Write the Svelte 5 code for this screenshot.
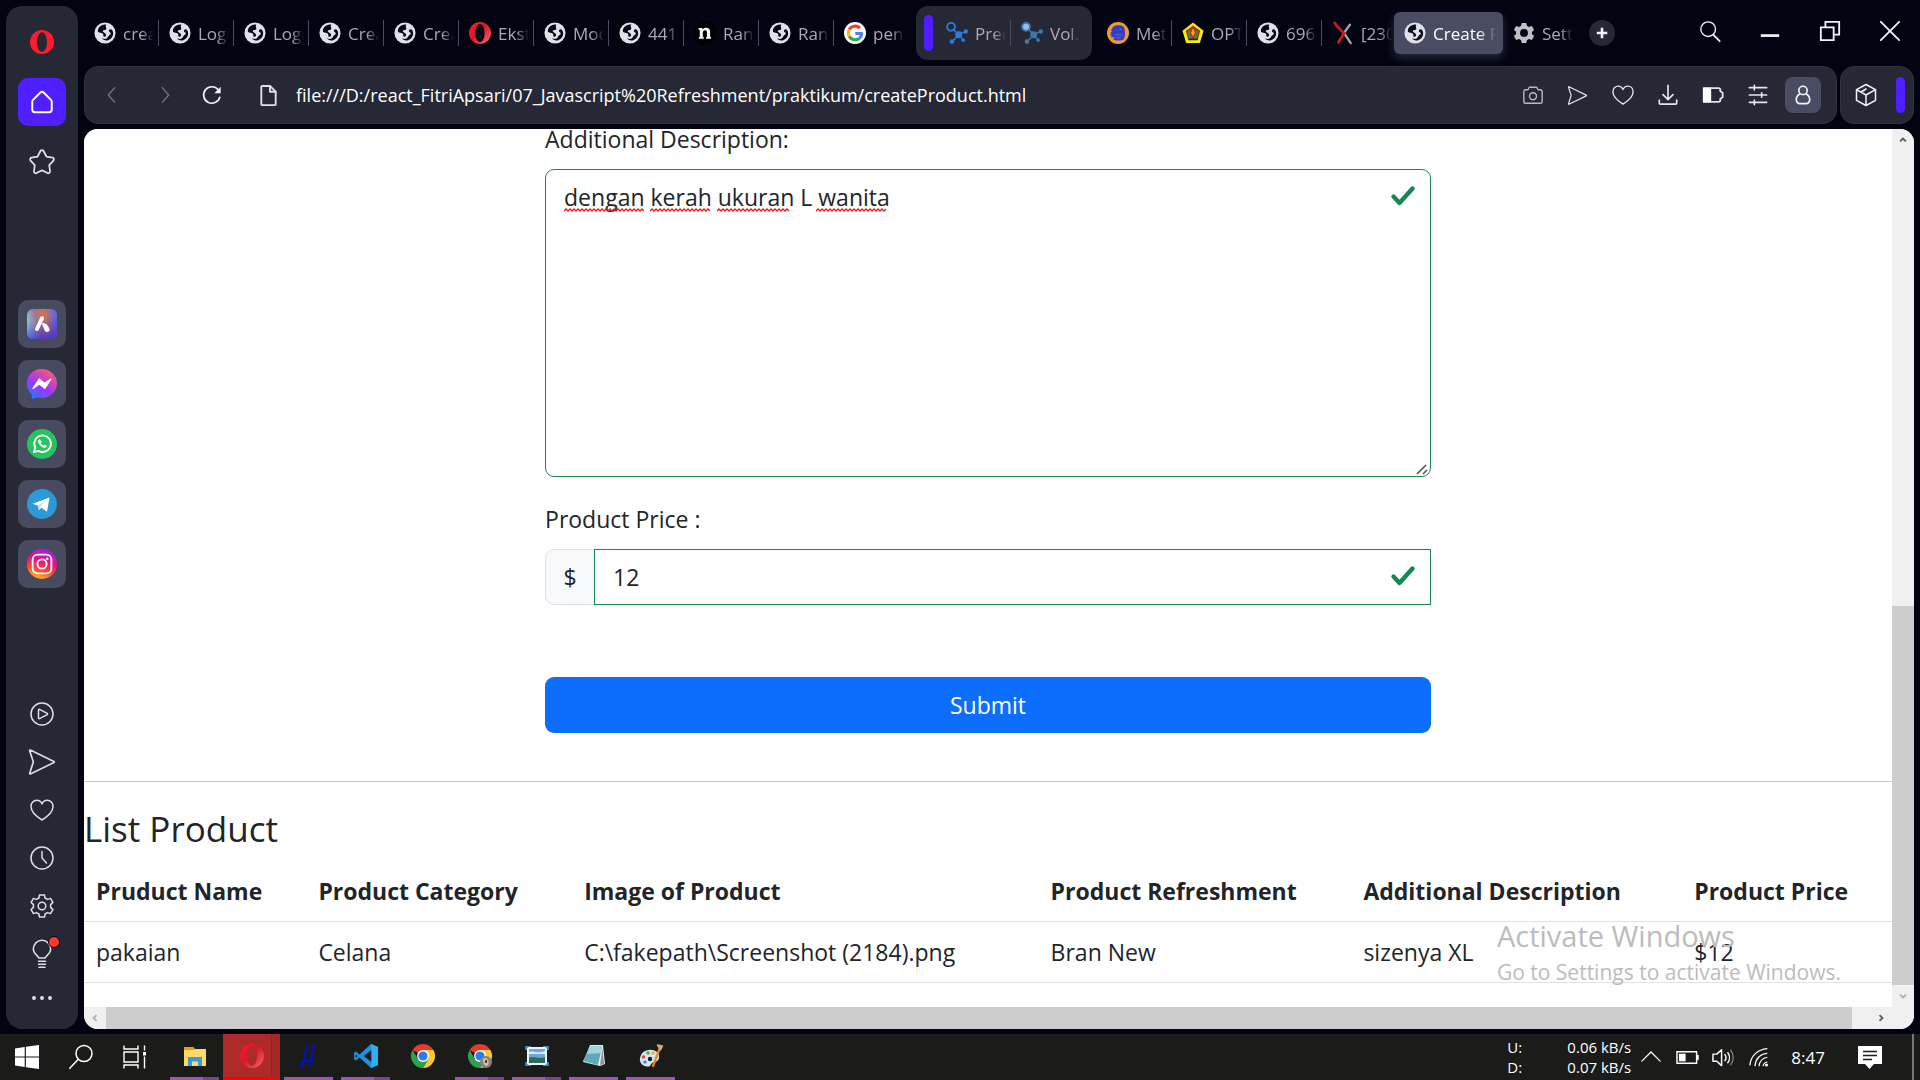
<script>
  const leftTabs = [
    { icon: 'globe', label: 'createProduct' },
    { icon: 'globe', label: 'Login' },
    { icon: 'globe', label: 'Login' },
    { icon: 'globe', label: 'Create' },
    { icon: 'globe', label: 'Create' },
    { icon: 'operaTab', label: 'Ekstensi' },
    { icon: 'globe', label: 'Modul' },
    { icon: 'globe', label: '4412' },
    { icon: 'npm', label: 'Random' },
    { icon: 'globe', label: 'Random' },
    { icon: 'google', label: 'pengertian' }
  ];
  const islandTabs = [
    { icon: 'graph', label: 'Predict' },
    { icon: 'graphAlt', label: 'Vol. 2' }
  ];
  const rightTabs = [
    { icon: 'meta', label: 'Metode' },
    { icon: 'crest', label: 'OPTIM' },
    { icon: 'globe', label: '6964' },
    { icon: 'cross', label: '[2304' }
  ];
  const apps = ['aria', 'messenger', 'whatsapp', 'telegram', 'instagram'];
  const tools = ['play', 'send', 'heart', 'clock', 'gear', 'bulb'];
  const pageTools = ['camera', 'send', 'heart', 'download', 'battery', 'tune'];
  const headings = ['Pruduct Name', 'Product Category', 'Image of Product', 'Product Refreshment', 'Additional Description', 'Product Price'];
  const products = [['pakaian', 'Celana', 'C:\\fakepath\\Screenshot (2184).png', 'Bran New', 'sizenya XL', '$12']];
  const taskbar = [
    { icon: 'explorer', state: 'multi' },
    { icon: 'operaTask', state: 'active' },
    { icon: 'hash', state: 'open' },
    { icon: 'vscode', state: 'multi' },
    { icon: 'chrome', state: 'idle' },
    { icon: 'chromeUser', state: 'multi' },
    { icon: 'photos', state: 'multi' },
    { icon: 'notepad', state: 'open' },
    { icon: 'paint', state: 'open' }
  ];
  let description = $state('dengan kerah ukuran L wanita');
  let price = $state('12');

  function wave(width) {
    let d = 'M0 3';
    for (let x = 2; x <= width; x += 2) d += `L${x} ${x % 4 === 0 ? 3 : 1}`;
    return d;
  }
</script>

{#snippet chromeMark()}
  <path d="M12 12 1.6 6A12 12 0 0 1 22.4 6Z" fill="#e33b2e" />
  <path d="M12 12V6h10.4A12 12 0 0 1 12 24l5.2-9Z" fill="#fcc934" />
  <path d="M12 12 17.2 15 12 24A12 12 0 0 1 1.6 6l5.2 9Z" fill="#2da24c" />
  <circle cx="12" cy="12" r="5.9" fill="#fff" />
  <circle cx="12" cy="12" r="4.6" fill="#2b7de9" />
{/snippet}

{#snippet icon(name)}
  <svg class="icon {name}" viewBox="0 0 24 24" fill="none" stroke="currentColor" stroke-width="1.5" stroke-linecap="round" stroke-linejoin="round" aria-hidden="true">
    {#if name === 'globe'}
      <circle cx="12" cy="12" r="11.5" fill="#dfe3e8" stroke="none" />
      <path d="M13.5 2.8c-3.5-.4-6.800 1-8.600 4-1.200 2-1 4.200.8 4.600 2 .5 3.200.2 4.200 1.600.9 1.300-.6 2.300 1 3 1.400.6 2.600-.7 2.200-2.300-.4-1.500-2.600-2-3.300-3-.8-1.200.3-2 1.800-2.100 1.700-.1 2.100-.9 1.700-2-.4-1.200-.9-2.500.2-3.800Z" fill="#060817" stroke="none" />
      <path d="M18.500 8c-1.200-.2-2.500.7-2.200 2 .3 1.200 1.900.9 2 2.300.1 1.700-2 1.900-2.700 3.300-.6 1.300-1.200 2.400-2.800 2.800-1.500.3-3-.2-4.200-.9 1 2 4 3.400 6.900 2.400 3.500-1.200 5.400-4.300 5.400-7.600 0-1.600-1-4-2.400-4.300Z" fill="#060817" stroke="none" />
    {:else if name === 'opera' || name === 'operaTab' || name === 'operaTask'}
      <defs>
        <linearGradient id="op-{name}" x1="0" y1="0" x2="1" y2="1"><stop offset="0" stop-color="#ff1b2d" /><stop offset=".45" stop-color={name === 'opera' ? '#ff1b2d' : '#d8182a'} /><stop offset="1" stop-color={name === 'opera' ? '#ff1b2d' : '#ff6468'} /></linearGradient>
      </defs>
      <path d="M12 0a12 12 0 1 0 0 24 12 12 0 0 0 0-24Zm0 2.200c3 0 5 4.500 5 9.800s-2 9.800-5 9.800-5-4.500-5-9.800 2-9.800 5-9.800Z" fill="url(#op-{name})" fill-rule="evenodd" stroke="none" />
    {:else if name === 'npm'}
      <circle cx="12" cy="12" r="12" fill="#000" stroke="none" />
      <path d="M6 6.500h3.300v1.600C10.300 6.900 11.600 6.200 13.300 6.200c3 0 4.300 1.800 4.300 4.800v5.300h1v2h-5.500v-2h1V11.300c0-1.500-.6-2.300-2-2.300-1.500 0-2.500 1-2.500 2.700v4.600h1v2H5.300v-2h1V8.500H5v-2Z" fill="#f3f5f7" stroke="none" />
    {:else if name === 'google'}
      <circle cx="12" cy="12" r="12" fill="#fff" stroke="none" />
      <g stroke-width="3.400" stroke-linecap="butt">
        <path d="M17.300 6.700A7.300 7.300 0 0 0 5.700 8.300" stroke="#ea4335" />
        <path d="M5.700 8.300a7.300 7.300 0 0 0 0 7.400" stroke="#fbbc05" />
        <path d="M5.700 15.700a7.300 7.300 0 0 0 11 2" stroke="#34a853" />
        <path d="M16.700 17.700A7 7 0 0 0 19.300 12.500H12.300" stroke="#4285f4" />
      </g>
    {:else if name === 'graph' || name === 'graphAlt'}
      <g stroke={name === 'graph' ? '#2b7de0' : '#4377a8'} stroke-width="1.600">
        <path d="m8 8 6 6M14 14l7-3.500M14 14l-7 7M14 14l4.500 5.500" />
        <g fill={name === 'graph' ? '#2b7de0' : '#4377a8'}><circle cx="13.800" cy="14" r="3" /><circle cx="21.600" cy="10.300" r="1.600" /><circle cx="6.500" cy="21.300" r="1.800" /><circle cx="18.700" cy="19.800" r="1.200" /></g>
        <circle cx="5.500" cy="5.300" r="4.300" fill={name === 'graph' ? 'none' : '#8fc0ee'} stroke-width="2" />
      </g>
    {:else if name === 'meta'}
      <circle cx="12" cy="12" r="12" fill="#f39a2d" stroke="none" />
      <path d="M7 5c3-2 8-2 11 0 2 2 2.500 12 0 14-3 1.500-8 1.500-11 0l1-2.500H4l1.500-2H3l2-2.500H3.500L6 9.500H4Z" fill="#2f3fc4" stroke="none" />
      <path d="M14 8h2M9 14h8M10 17h5" stroke="#7a4bb8" />
    {:else if name === 'crest'}
      <path d="m12 .5 11.500 9L19.500 23h-15L.5 9.500Z" fill="#f5ea14" stroke="none" />
      <path d="m12 5 7 5-2.500 9h-9L5 10Z" fill="#3f8f3a" stroke="#9b2c1e" />
      <path d="M12 4.500 15 12l-3 5-3-5Z" fill="#f2a81d" stroke="#c22b1c" />
      <path d="M8 19h8" stroke="#222" stroke-width="2" />
    {:else if name === 'cross'}
      <path d="M19.500 3 13 12l7.500 11" stroke="#a8a4a2" stroke-width="2.500" />
      <path d="M3 1c3 5 7 8 10 11.500-2 4-4 6.500-6 9.500" stroke="#bf1c24" stroke-width="3.200" />
    {:else if name === 'gearSolid'}
      <path d="M9.500 1h5l.7 3.200 2.200 1.200 3.200-1 2.400 4.200-2.400 2.200v2.400l2.400 2.200-2.400 4.200-3.200-1-2.200 1.200-.7 3.200h-5l-.7-3.200-2.200-1.200-3.200 1L1 15.200 3.400 13v-2.400L1 8.600l2.400-4.200 3.200 1 2.200-1.200ZM12 7.600a4.300 4.300 0 1 0 0 8.600 4.300 4.300 0 0 0 0-8.600Z" fill="#bfc0c6" fill-rule="evenodd" stroke="none" />
    {:else if name === 'plus'}
      <path d="M12 3v18M3 12h18" stroke-width="4.500" stroke-linecap="butt" />
    {:else if name === 'search'}
      <circle cx="10" cy="10" r="8" /><path d="m15.500 16 7 7" stroke-width="2" />
    {:else if name === 'minimise'}
      <path d="M2 17h20" stroke-width="3" stroke-linecap="butt" />
    {:else if name === 'restore'}
      <path d="M2 8h14v14H2ZM7 8V2h15v14h-6" stroke-width="2" stroke-linejoin="miter" />
    {:else if name === 'close'}
      <path d="m2 2 20 20M22 2 2 22" stroke-width="2" />
    {:else if name === 'back'}
      <path d="m15 4-7 8 7 8" />
    {:else if name === 'forward'}
      <path d="m9 4 7 8-7 8" />
    {:else if name === 'reload'}
      <path d="M20.500 14.500A9 9 0 1 1 19 6.500" stroke-width="1.800" /><path d="M21.500 3v7h-7Z" fill="currentColor" stroke="none" />
    {:else if name === 'file'}
      <path d="M13.500 2H5.500a1 1 0 0 0-1 1v18a1 1 0 0 0 1 1h13a1 1 0 0 0 1-1V8Z" stroke-width="2" /><path d="M13.500 2v6h6" stroke-width="2" />
    {:else if name === 'home'}
      <path d="M12 2.500c-.6 0-1.100.3-1.500.7L3.700 10c-.5.500-.7 1-.7 1.700V19c0 1.400 1 2.500 2.500 2.500h13c1.500 0 2.500-1.100 2.500-2.500v-7.300c0-.7-.2-1.200-.7-1.700l-6.800-6.800c-.4-.4-.9-.7-1.500-.7Z" stroke-width="1.800" />
    {:else if name === 'star'}
      <path d="M10.700 2.600a1.500 1.500 0 0 1 2.600 0l2.500 4.700 5.200 1a1.500 1.500 0 0 1 .8 2.500l-3.600 3.900.7 5.300a1.500 1.500 0 0 1-2.100 1.500L12 19.200l-4.800 2.300A1.500 1.500 0 0 1 5.100 20l.7-5.300-3.600-3.900A1.500 1.500 0 0 1 3 8.300l5.200-1Z" />
    {:else if name === 'play'}
      <circle cx="12" cy="12" r="11" /><path d="M8.500 8v8c0 .6.500.8 1 .6l7.700-4c.5-.3.500-.9 0-1.200l-7.700-4c-.5-.2-1 0-1 .6Z" />
    {:else if name === 'send'}
      <path d="M1.200 1c-.4-.2-.7.100-.6.500L4 12 .6 22.500c-.1.400.2.700.6.500L23 12.500c.5-.3.500-.7 0-1Z" />
    {:else if name === 'heart'}
      <path d="M12 22C8 19.500 1 14.500 1 8.500 1 5 3.500 2.300 6.800 2.300c2.200 0 4.200 1.300 5.200 3.700 1-2.400 3-3.700 5.200-3.700C20.500 2.300 23 5 23 8.500 23 14.500 16 19.500 12 22Z" />
    {:else if name === 'clock'}
      <circle cx="12" cy="12" r="11" /><path d="M12 5.500V12l4.500 5" />
    {:else if name === 'gear'}
      <path d="M9.500 1h5l.6 3 2.400 1.400 3-1 2.400 4-2.300 2.200v2.800l2.300 2.200-2.400 4-3-1-2.400 1.400-.6 3h-5l-.6-3-2.400-1.400-3 1-2.400-4 2.300-2.200v-2.800L1.100 8.400l2.400-4 3 1L8.900 4Z" /><circle cx="12" cy="12" r="3.800" />
    {:else if name === 'bulb'}
      <path d="M8.800 16c0-2-5.500-3.800-5.500-9a8.700 8.700 0 0 1 17.400 0c0 5.200-5.500 7-5.500 9ZM8.500 19.200h7M8.500 22.200h7M9 25.200h6" />
    {:else if name === 'dots'}
      <g fill="currentColor" stroke="none"><circle cx="4" cy="12" r="2" /><circle cx="12" cy="12" r="2" /><circle cx="20" cy="12" r="2" /></g>
    {:else if name === 'camera'}
      <path d="M8 3.500h8l1.500 2.800H20a2 2 0 0 1 2 2V19a2 2 0 0 1-2 2H4a2 2 0 0 1-2-2V8.300a2 2 0 0 1 2-2h2.500Z" /><circle cx="12" cy="13.300" r="3.800" />
    {:else if name === 'download'}
      <path d="M12 1.500V17M6.500 11.500 12 17l5.500-5.500M2.500 17.500v3.300c0 .7.500 1.200 1.200 1.200h16.600c.7 0 1.200-.5 1.200-1.200v-3.300" stroke-width="1.800" />
    {:else if name === 'battery'}
      <path d="M2 4.500h16a2 2 0 0 1 2 2V8l2.500 1.500v5L20 16v1.500a2 2 0 0 1-2 2H2Z" stroke-width="2" /><path d="M1 4h9v16H1Z" fill="#fff" stroke="none" />
    {:else if name === 'tune'}
      <path d="M2.500 4h19M2.500 12h19M2.500 20h19M8 1.500v5M16 9.500v5M8 17.500v5" stroke-width="1.800" />
    {:else if name === 'profile'}
      <circle cx="12" cy="6.500" r="5" stroke-width="2" /><path d="M8.500 10.500C5 12.500 3.500 16 4.200 19c.5 2.200 2 3.300 4 3.300h7.600c2 0 3.500-1.100 4-3.300.7-3-.8-6.500-4.300-8.500" stroke-width="2" />
    {:else if name === 'cube'}
      <path d="m12 1.500 9.500 5.200v10.600L12 22.500l-9.500-5.200V6.700ZM2.500 6.700 12 12l9.500-5.300M12 12v10.500M7 9l5-3" stroke-width="1.500" />
    {:else if name === 'aria'}
      <defs><linearGradient id="aria" x1="0" y1=".6" x2="1" y2=".4"><stop offset="0" stop-color="#79cbe6" /><stop offset=".35" stop-color="#a8748a" /><stop offset=".65" stop-color="#cf7350" /><stop offset="1" stop-color="#5a6af0" /></linearGradient>
        <linearGradient id="ariaLow" x1=".2" y1="0" x2=".5" y2="1"><stop offset=".35" stop-color="#4336c9" stop-opacity="0" /><stop offset="1" stop-color="#4330d0" stop-opacity=".85" /></linearGradient></defs>
      <rect width="24" height="24" rx="5" fill="url(#aria)" stroke="none" /><rect width="24" height="24" rx="5" fill="url(#ariaLow)" stroke="none" />
      <path d="M12 7.500 8 16" stroke="#fff" stroke-width="3.200" /><path d="M12.800 12c1.800 0 3.700 2 4.500 4.300.3 1.300-1.300 1.800-2.200 1Z" fill="#fff" stroke="#fff" />
    {:else if name === 'messenger'}
      <defs><linearGradient id="msg" x1=".2" y1="1" x2=".8" y2="0"><stop offset="0" stop-color="#1f7dff" /><stop offset=".4" stop-color="#9a35ff" /><stop offset="1" stop-color="#ff5e6c" /></linearGradient></defs>
      <path d="M12 0a12 11.600 0 0 1 0 23.200c-1.500 0-2.700-.2-4-.6L4 24l-.2-3.800A11.500 11.500 0 0 1 12 0Z" fill="url(#msg)" stroke="none" />
      <path d="m4.800 15.500 5-7.500 4.300 3.500 5.100-3.500-5 7.500-4.300-3.500Z" fill="#fff" stroke="#fff" stroke-width="1" />
    {:else if name === 'whatsapp'}
      <circle cx="12" cy="12" r="12" fill="#25c45f" stroke="none" />
      <path d="M5.500 18.500 6.700 15a6.600 6.600 0 1 1 2.500 2.500Z" stroke="#fff" stroke-width="1.500" />
      <path d="M9.800 8.500c-.8.500-.9 1.600-.3 2.700.8 1.600 2 2.800 3.700 3.500 1.200.5 2.200.1 2.500-.9l-1.700-1-1 .8c-1-.4-1.800-1.200-2.200-2.200l.6-.9Z" fill="#fff" stroke="#fff" stroke-width=".6" />
    {:else if name === 'telegram'}
      <circle cx="12" cy="12" r="12" fill="#2a9bd6" stroke="none" />
      <path d="M4.500 11.800 18 6.700l-2 11.500-4.500-3.200-2 2-.7-3.700Z" fill="#fff" stroke="none" /><path d="m9 13.200 6.500-4.500-5 5.200-.8 2.600Z" fill="#b9dcf0" stroke="none" />
    {:else if name === 'instagram'}
      <defs><linearGradient id="ig" x1=".3" y1="1" x2=".6" y2="0"><stop offset="0" stop-color="#ffc31d" /><stop offset=".3" stop-color="#ff4b30" /><stop offset=".6" stop-color="#e8137c" /><stop offset="1" stop-color="#a31cf2" /></linearGradient></defs>
      <circle cx="12" cy="12" r="12" fill="url(#ig)" stroke="none" />
      <rect x="4.500" y="4.500" width="15" height="15" rx="4" stroke="#fff" /><circle cx="12" cy="12" r="3.700" stroke="#fff" /><circle cx="16.200" cy="7.800" r="1" fill="#fff" stroke="none" />
    {:else if name === 'windows'}
      <path d="M0 3.400 9.700 2v9.500H0ZM10.900 1.800 24 0v11.500H10.900ZM0 12.600h9.700V22L0 20.600ZM10.900 12.600H24V24l-13.100-1.800Z" fill="#fff" stroke="none" />
    {:else if name === 'searchTask'}
      <circle cx="15" cy="8.500" r="8" /><path d="M9.300 14.200.8 23.200" />
    {:else if name === 'taskview'}
      <path d="M1 .5V4h14V.5M1 7h14v10H1ZM1 23.500V20h14v3.500M21.500.5v5M21.500 11.500V23.500" stroke-linejoin="miter" stroke-linecap="butt" stroke-width="1.400" /><path d="M20 7h3v3.500h-3Z" fill="#fff" stroke="none" />
    {:else if name === 'explorer'}
      <path d="M1 3h9l2 2h11v17H1Z" fill="#ffd866" stroke="none" /><path d="M1 3h9l2 3H1Z" fill="#e69f12" stroke="none" /><path d="M5 13h14v9h-4v-4.500H9V22H5Z" fill="#3c97dc" stroke="none" />
    {:else if name === 'hash'}
      <path d="M10 1.500 5.500 22M17 1.500l-4.500 21M4 21.500 6.500 17l9-.8" stroke="#0712a8" stroke-width="2.600" />
    {:else if name === 'vscode'}
      <path d="M17 0 24 3v18l-7 3L5.500 13.500 2 16.500 0 15.300V8.700l2-1.200 3.500 3Z" fill="#1d8fdc" stroke="none" /><path d="M17.500 6v12L9.800 12ZM1.500 10.300 3.800 12l-2.300 1.700Z" fill="#1b1b1a" stroke="none" /><path d="M17 0 24 3v18l-7 3 .5-6V6Z" fill="#2fb0f5" stroke="none" />
    {:else if name === 'chrome'}
      <g stroke="none">{@render chromeMark()}</g>
    {:else if name === 'chromeUser'}
      <g stroke="none">{@render chromeMark()}<circle cx="18" cy="18" r="6" fill="#8b8177" /><path d="M15 15c2-2 4-1 5 1s1 4-1 6c-3 0-4-3-4-7Z" fill="#c9c2b8" /><path d="M17 16h2v3h-2Z" fill="#4c443d" /></g>
    {:else if name === 'photos'}
      <path d="M0 2h6v4H0ZM18 2h6v4h-6ZM0 18h6v4H0ZM18 18h6v4h-6Z" fill="#3d82c0" stroke="none" /><rect x="3" y="4" width="18" height="16" rx="1" fill="#6ea6dc" stroke="#eef3f8" stroke-width="2" /><path d="M4 14c5-3 8 2 16-1v6H4Z" fill="#2e6d57" stroke="none" /><path d="M4 8c4-2 8 2 16-1v3H4Z" fill="#d5ebf9" stroke="none" />
    {:else if name === 'notepad'}
      <path d="M8 1h13l2 19-5 2-17-4Z" fill="#dfeef0" stroke="none" /><path d="M8.500 2 20 2.500 16 21 1 17Z" fill="#5fa9b8" stroke="none" /><path d="M8.500 2 20 2.500 18.500 9 5 10Z" fill="#a4d3da" stroke="none" /><path d="m20.500 4 1.500 16-4 1Z" fill="#8a9693" stroke="none" />
    {:else if name === 'paint'}
      <path d="M10 6c6-1 11 3 10 8s-5 3-7 5-1 4-5 3.500S0 19 1 14s4-7.500 9-8Z" fill="#cfe6f6" stroke="none" /><circle cx="11" cy="15" r="2.200" fill="#1b1b1a" stroke="none" /><circle cx="4.500" cy="13" r="1.800" fill="#e2483d" stroke="none" /><circle cx="9" cy="9" r="1.800" fill="#56ab3f" stroke="none" /><circle cx="14" cy="9" r="1.800" fill="#f0b429" stroke="none" /><circle cx="6" cy="18" r="1.600" fill="#3a7bd5" stroke="none" /><path d="M20.500 5 14 22" stroke="#e98a25" stroke-width="2.200" /><path d="m18.500 1 5 1-2 4Z" fill="#cfa77a" stroke="#cfa77a" />
    {:else if name === 'caret'}
      <path d="m1 17 11-11 11 11" stroke-width="1.500" stroke-linejoin="miter" />
    {:else if name === 'power'}
      <path d="M1 6h20.500v12H1ZM23 10v4" stroke-linejoin="miter" /><path d="M3 8h7v8H3Z" fill="#fff" stroke="none" />
    {:else if name === 'volume'}
      <path d="M1 8.500h4L10 4v16.500L5 16H1Z" /><path d="M13.500 9c1.300 1.800 1.300 4.500 0 6.300M16.500 7c2.200 3 2.200 7.500 0 10.500" /><path d="M19.500 4.500c3.500 4.500 3.500 10.500 0 15" stroke="#777" />
    {:else if name === 'wifi'}
      <path d="M1 22C2 11 10 3 22 2M7 23C8 14 13 8.500 22 7.500M12 23c.8-6 4-9.800 10-10.700M17 23c.3-2.500 2-4.600 5-5" stroke-linecap="butt" /><circle cx="21" cy="21.500" r="1.800" fill="#fff" stroke="none" />
    {:else if name === 'notice'}
      <path d="M0 1h24v18h-8l-4.500 5L7 19H0Z" fill="#fff" stroke="none" /><path d="M5 6.500h14M5 10.500h14M5 14.500h9" stroke="#1b1b1a" stroke-linecap="butt" />
    {:else if name === 'check'}
      <path d="m2.500 12.500 6 6.500L21.500 4.500" stroke="#198754" stroke-width="4.400" />
    {:else if name === 'arrow'}
      <path d="m5 15.500 7-7 7 7" stroke-width="4.500" stroke-linecap="butt" stroke-linejoin="miter" />
    {/if}
  </svg>
{/snippet}

{#snippet tab(item)}
  <button class="tab" role="tab" aria-selected="false">
    {@render icon(item.icon)}<span class="tab-label">{item.label}</span>
  </button>
{/snippet}

{#snippet squiggle(width)}
  <svg class="squiggle" {width} height="4"><path d={wave(width)} fill="none" stroke="#f01818" stroke-width="1.3" /></svg>
{/snippet}

<div class="screen">
  <div class="browser">
    <nav class="sidebar" aria-label="Sidebar">
      <button class="side" aria-label="Opera menu">{@render icon('opera')}</button>
      <button class="side home-button" aria-label="Home">{@render icon('home')}</button>
      <button class="side" aria-label="Pinboards">{@render icon('star')}</button>
      <div class="apps">
        {#each apps as name}<button class="side app" aria-label={name}>{@render icon(name)}</button>{/each}
      </div>
      <div class="tools">
        {#each tools as name}
          <button class="side" aria-label={name}>{@render icon(name)}{#if name === 'bulb'}<span class="alert"></span>{/if}</button>
        {/each}
        <button class="side more" aria-label="More">{@render icon('dots')}</button>
      </div>
    </nav>

    <div class="main">
      <header class="tabbar">
        <div class="tabs" role="tablist">
          <div class="run">{#each leftTabs as item}{@render tab(item)}{/each}</div>
          <div class="island"><span class="bar"></span>{#each islandTabs as item}{@render tab(item)}{/each}</div>
          <div class="run">{#each rightTabs as item}{@render tab(item)}{/each}</div>
          <button class="tab active" role="tab" aria-selected="true">{@render icon('globe')}<span class="tab-label">Create Product</span></button>
          {@render tab({ icon: 'gearSolid', label: 'Settings' })}
        </div>
        <button class="new-tab" aria-label="New tab">{@render icon('plus')}</button>
        <div class="window-controls">
          {#each ['search', 'minimise', 'restore', 'close'] as name}<button aria-label={name}>{@render icon(name)}</button>{/each}
        </div>
      </header>

      <div class="toolbar">
        <div class="address">
          <div class="history">
            <button class="dim" aria-label="Back">{@render icon('back')}</button>
            <button class="dim" aria-label="Forward">{@render icon('forward')}</button>
            <button class="reload-button" aria-label="Reload">{@render icon('reload')}</button>
          </div>
          {@render icon('file')}
          <input class="url" aria-label="Address" value="file:///D:/react_FitriApsari/07_Javascript%20Refreshment/praktikum/createProduct.html" />
          <div class="page-tools">
            {#each pageTools as name}<button aria-label={name}>{@render icon(name)}</button>{/each}
          </div>
          <button class="profile-button" aria-label="Profile">{@render icon('profile')}</button>
        </div>
        <div class="extensions">
          <button aria-label="Extensions">{@render icon('cube')}</button><span class="bar"></span>
        </div>
      </div>

      <div class="viewport">
        <main class="page">
          <form onsubmit={(e) => e.preventDefault()}>
            <label for="description">Additional Description:</label>
            <div class="field">
              <textarea id="description" spellcheck="false" bind:value={description}></textarea>
              <span class="valid">{@render icon('check')}</span>
              <div class="spelling" aria-hidden="true">
                {@render squiggle(80)}{@render squiggle(61)}{@render squiggle(73)}{@render squiggle(71)}
              </div>
              <svg class="grip" viewBox="0 0 12 12" aria-hidden="true"><path d="m1 11 9-9M7 11l4-4" fill="none" stroke="#555" stroke-width="1.6" /></svg>
            </div>
            <label for="price">Product Price :</label>
            <div class="field group">
              <span class="prefix">$</span>
              <input id="price" class="price" bind:value={price} />
              <span class="valid">{@render icon('check')}</span>
            </div>
            <button class="submit" type="submit">Submit</button>
          </form>
          <hr />
          <h2>List Product</h2>
          <table>
            <colgroup><col class="c1" /><col class="c2" /><col class="c3" /><col class="c4" /><col class="c5" /><col /></colgroup>
            <thead><tr>{#each headings as text}<th scope="col">{text}</th>{/each}</tr></thead>
            <tbody>{#each products as row}<tr>{#each row as cell}<td>{cell}</td>{/each}</tr>{/each}</tbody>
          </table>
        </main>
        <div class="vscroll"><span class="up">{@render icon('arrow')}</span><div class="vtrack"><div class="vthumb"></div></div><span class="down">{@render icon('arrow')}</span></div>
        <div class="hscroll"><span class="left">{@render icon('arrow')}</span><div class="htrack"><div class="hthumb"></div></div><span class="right">{@render icon('arrow')}</span></div>
      </div>
    </div>
  </div>

  <footer class="taskbar">
    <div class="system-buttons">
      <button class="system" aria-label="Start">{@render icon('windows')}</button>
      <button class="system" aria-label="Search">{@render icon('searchTask')}</button>
      <button class="system" aria-label="Task view">{@render icon('taskview')}</button>
    </div>
    {#each taskbar as item}
      <button class="task {item.state}" aria-label={item.icon}>{@render icon(item.icon)}</button>
    {/each}
    <div class="tray">
      <dl class="network"><dt>U:</dt><dd>0.06 kB/s</dd><dt>D:</dt><dd>0.07 kB/s</dd></dl>
      <button aria-label="Hidden icons">{@render icon('caret')}</button>
      <button aria-label="Battery">{@render icon('power')}</button>
      <button aria-label="Volume">{@render icon('volume')}</button>
      <button aria-label="Network">{@render icon('wifi')}</button>
      <time>8:47</time>
      <button class="notice-button" aria-label="Notifications">{@render icon('notice')}</button>
    </div>
  </footer>

  <div class="watermark"><strong>Activate Windows</strong><span>Go to Settings to activate Windows.</span></div>
</div>

<style>
  :global(body) { margin: 0; background: #020412; }
  * { box-sizing: border-box; }
  .screen { position: relative; display: flex; flex-direction: column; height: 100vh; overflow: hidden; background: #020412; color: #f2f3f6; font-family: "Segoe UI", "Open Sans", "Noto Sans", sans-serif; font-size: 16px; }
  button { display: flex; align-items: center; justify-content: center; padding: 0; border: 0; background: none; color: inherit; font: inherit; }
  .icon { display: block; flex: none; width: 24px; height: 24px; overflow: visible; }

  .browser { display: flex; flex: 1; min-height: 0; gap: 6px; padding: 6px 6px 5px; }
  .sidebar { display: flex; flex: none; flex-direction: column; align-items: center; gap: 12px; width: 72px; padding: 12px 0 11px; border-radius: 16px; background: #262835; color: #dcdfe6; }
  .side { position: relative; width: 48px; height: 48px; border-radius: 10px; }
  .side .star { width: 28px; height: 28px; }
  .side .home { width: 26px; height: 26px; color: #fff; }
  .home-button { background: #4f1fff; }
  .apps { display: flex; flex-direction: column; gap: 12px; margin-top: 102px; }
  .app { background: #484a60; }
  .app .icon { width: 30px; height: 30px; }
  .tools { margin-top: auto; }
  .tools .send { width: 26px; height: 26px; }
  .tools .more { height: 40px; }
  .alert { position: absolute; top: 6px; right: 6px; width: 12px; height: 12px; border: 1px solid #020412; border-radius: 50%; background: #ff3830; }

  .main { display: flex; flex: 1; flex-direction: column; min-width: 0; }
  .tabbar { display: flex; align-items: center; height: 54px; }
  .tabs, .run { display: flex; align-items: center; }
  .tab { position: relative; justify-content: flex-start; gap: 7px; width: 75px; height: 42px; padding: 0 5px 0 10px; color: #a9abb4; font-size: 17px; }
  .tab .icon { width: 22px; height: 22px; }
  .tab-label { flex: 1; overflow: hidden; text-align: left; white-space: nowrap; mask-image: linear-gradient(90deg, #000 60%, transparent); }
  .run .tab:not(:last-child)::after, .island .tab:not(:last-child)::after { content: ""; position: absolute; top: 8px; right: 0; bottom: 8px; width: 1px; background: #4a4c63; }
  .island { display: flex; align-items: center; height: 54px; margin: 0 5px 0 7px; padding: 0 6px 0 8px; border-radius: 12px; background: #262835; }
  .bar { width: 9px; height: 36px; border-radius: 5px; background: #4f1fff; }
  .island .bar { margin-right: 3px; }
  .tab.active { width: 109px; margin: 0 0 0 -3px; padding-right: 6px; border-radius: 6px; background: #4a4c63; box-shadow: 0 4px 10px #4a4c6388; color: #fff; }
  .tab.active .tab-label { mask-image: linear-gradient(90deg, #000 70%, transparent); }
  .new-tab { width: 26px; height: 26px; margin-left: 11px; border-radius: 50%; background: #262835; }
  .new-tab .icon { width: 14px; height: 14px; }
  .window-controls { display: flex; margin: 0 -6px 0 auto; }
  .window-controls button { width: 60px; height: 48px; }
  .window-controls .icon { width: 22px; height: 22px; margin-bottom: 4px; }

  .toolbar { display: flex; gap: 3px; height: 58px; margin-top: 6px; }
  .address, .extensions { display: flex; align-items: center; border: 1px solid #30323f; border-radius: 14px; background: #262835; }
  .address { flex: 1; min-width: 0; padding: 0 15px 0 0; }
  .history { display: flex; margin-right: 24px; }
  .history button { width: 53px; height: 48px; }
  .history .reload-button { width: 42px; }
  .history .icon { width: 22px; height: 22px; }
  .dim { color: #74767f; }
  .address > .file { width: 23px; height: 23px; color: #dcdfe6; }
  .url { flex: 1; min-width: 0; margin-left: 16px; padding: 0; border: 0; outline: 0; background: none; color: #fff; font: inherit; font-size: 18px; }
  .page-tools { display: flex; }
  .page-tools button { width: 45px; height: 48px; color: #e4e6ea; }
  .page-tools .icon { width: 22px; height: 22px; }
  .page-tools .send { width: 19px; height: 19px; }
  .page-tools .camera { color: #b9bbc2; }
  .profile-button { width: 36px; height: 36px; margin-left: 5px; border-radius: 8px; background: #4a4c63; }
  .profile-button .icon { width: 20px; height: 20px; }
  .extensions { width: 74px; justify-content: space-between; padding: 0 8px 0 13px; }

  .viewport { display: grid; flex: 1; grid-template: 1fr 22px / 1fr 22px; min-height: 0; margin-top: 5px; overflow: hidden; border-radius: 14px; background: #fff; }
  .page { min-width: 0; min-height: 0; overflow: hidden; background: #fff; color: #212529; font-size: 23px; line-height: 36px; }
  form { width: 49%; margin: -8px auto 48px; }
  label { display: block; margin-bottom: 12px; }
  .field { position: relative; margin-bottom: 24px; }
  textarea { display: block; width: 100%; height: 308px; padding: 9px 54px 9px 18px; border: 1px solid #198754; border-radius: 9px; outline: 0; background: #fff; color: inherit; font: inherit; resize: vertical; }
  textarea::-webkit-resizer { background: transparent; }
  .grip { position: absolute; right: 3px; bottom: 2px; width: 12px; height: 12px; pointer-events: none; }
  .valid { position: absolute; top: 15px; right: 16px; pointer-events: none; }
  .spelling { position: absolute; top: 39px; left: 19px; display: flex; gap: 6px; pointer-events: none; }
  .squiggle:last-child { margin-left: 20px; }
  .group { display: flex; margin-bottom: 72px; }
  .prefix { width: 50px; border: 1px solid #dee2e6; border-radius: 9px 0 0 9px; background: #f8f9fa; line-height: 54px; text-align: center; }
  .price { flex: 1; min-width: 0; height: 56px; margin-left: -1px; padding: 0 54px 0 18px; border: 1px solid #198754; border-radius: 0; outline: 0; background: #fff; color: inherit; font: inherit; }
  .submit { width: 100%; height: 56px; border-radius: 9px; background: #0d6efd; color: #fff; }
  hr { margin: 0 0 24px; border: 0; border-top: 1px solid #c7c8c9; }
  h2 { margin: 0 0 10px; font-size: 35px; font-weight: 500; line-height: 45px; }
  table { width: 100%; border-collapse: collapse; table-layout: fixed; }
  th, td { padding: 12px; border-bottom: 1px solid #dee2e6; text-align: left; white-space: nowrap; }
  th { font-weight: 700; }
  .c1 { width: 12.3%; }
  .c2 { width: 14.7%; }
  .c3 { width: 25.8%; }
  .c4 { width: 17.3%; }
  .c5 { width: 18.3%; }

  .vscroll { display: flex; flex-direction: column; background: #f0f0f0; color: #606060; }
  .hscroll { display: flex; grid-column: 1 / 3; padding-right: 22px; background: #f0f0f0; color: #606060; }
  .vscroll span, .hscroll span { display: grid; flex: none; place-items: center; width: 22px; height: 22px; }
  .vscroll .icon, .hscroll .icon { width: 10px; height: 10px; }
  .vtrack { display: flex; flex: 1; flex-direction: column; justify-content: flex-end; }
  .vthumb { height: 45.5%; background: #cdcdcd; }
  .htrack { flex: 1; }
  .hthumb { width: 99%; height: 100%; background: #cdcdcd; }
  .down .icon { transform: rotate(180deg); color: #b0b0b0; }
  .left .icon { transform: rotate(-90deg); color: #b0b0b0; }
  .right .icon { transform: rotate(90deg); }

  .taskbar { display: flex; height: 46px; background: #1b1b1a; color: #fff; font-size: 15px; }
  .system-buttons { display: flex; margin-right: 4px; }
  .system { width: 54px; }
  .task { width: 57px; border-bottom: 3px solid transparent; }
  .open { border-image: linear-gradient(90deg, transparent 7px, #9b55bb 7px, #9b55bb 50px, transparent 50px) 3; }
  .multi { border-image: linear-gradient(90deg, transparent 7px, #9b55bb 7px, #9b55bb 36px, #76458c 36px, #76458c 50px, transparent 50px) 3; }
  .task.open, .task.multi { border-width: 0 0 3px; }
  .active.task { border-bottom-color: #f00; background: linear-gradient(90deg, #ac2a2a 48px, #8f2323 48px, #a32828 50px); }
  .tray { display: flex; align-items: center; margin-left: auto; padding-right: 5px; border-right: 2px solid #777; margin-right: 6px; }
  .network { display: grid; grid-template-columns: 60px 64px; margin: 0 2px 0 0; line-height: 20px; }
  dd { margin: 0; white-space: nowrap; }
  .tray button { width: 36px; height: 46px; }
  .tray .icon { width: 20px; height: 20px; }
  .tray .power, .tray .volume { width: 23px; height: 23px; }
  time { margin: 0 33px 0 14px; font-size: 17px; }
  .tray .notice-button { width: 24px; margin-right: 25px; }
  .tray .notice { width: 24px; height: 24px; }

  .watermark { position: absolute; right: 79px; bottom: 93px; display: flex; flex-direction: column; color: #bcbcbc; pointer-events: none; font-size: 21px; line-height: 30px; }
  .watermark strong { font-size: 29px; font-weight: 400; line-height: 42px; }
</style>
